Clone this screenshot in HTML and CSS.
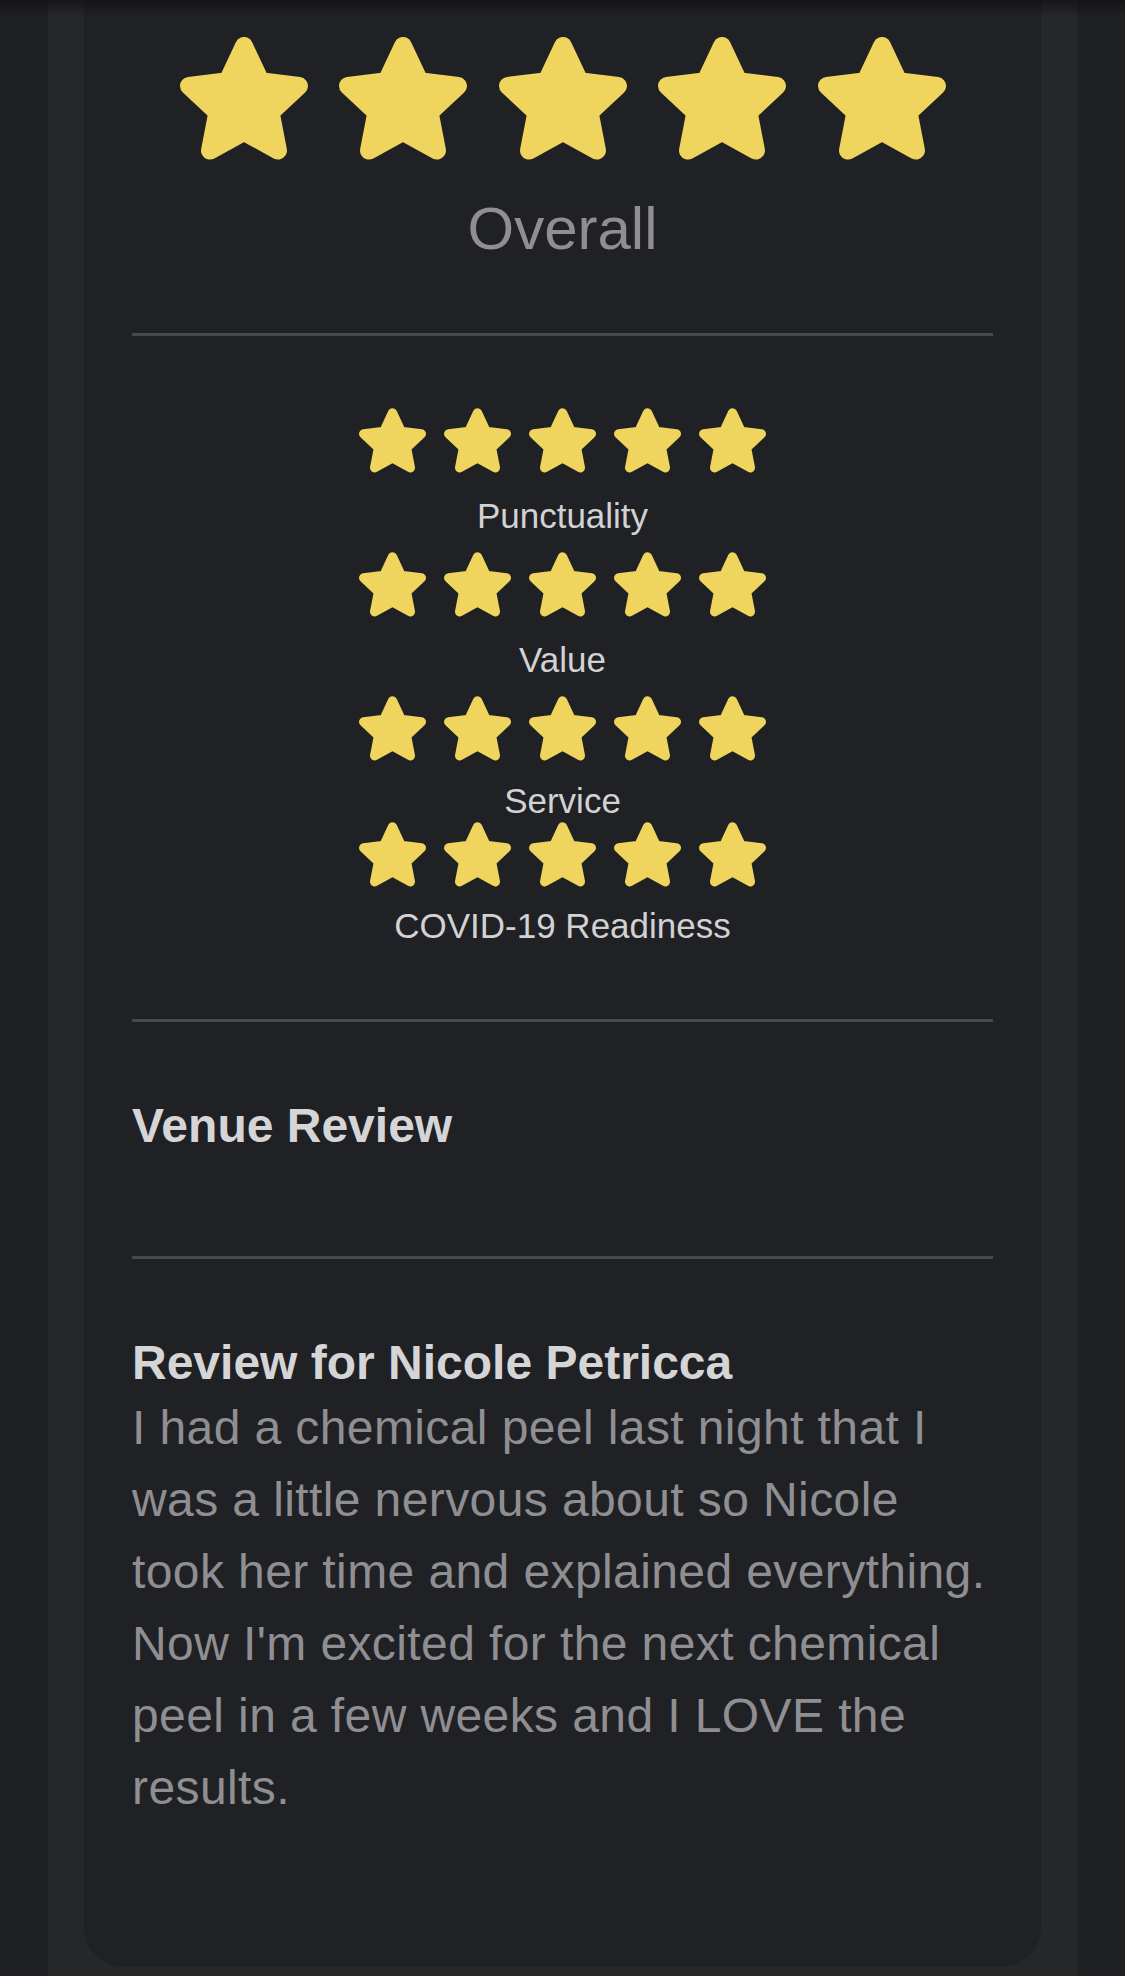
FILE: index.html
```html
<!DOCTYPE html>
<html lang="en">
<head>
<meta charset="utf-8">
<title>Review</title>
<link rel="stylesheet" href="styles.css">
</head>
<body>
<svg class="defs" width="0" height="0" aria-hidden="true">
  <symbol id="star" viewBox="0 0 128 123">
    <polygon points="64,9 80.46,44.15 118.97,48.94 90.63,75.45 97.97,113.56 64,94.8 30.03,113.56 37.37,75.45 9.03,48.94 47.54,44.15" fill="#efd55e" stroke="#efd55e" stroke-width="18" stroke-linejoin="round"/>
  </symbol>
</svg>
<div class="topshade"></div>
<div class="page">
  <div class="card">
    <div class="stars stars-lg">
      <svg class="star"><use href="#star"/></svg>
      <svg class="star"><use href="#star"/></svg>
      <svg class="star"><use href="#star"/></svg>
      <svg class="star"><use href="#star"/></svg>
      <svg class="star"><use href="#star"/></svg>
    </div>
    <div class="overall">Overall</div>
    <div class="divider divider-a"></div>
    <div class="ratings">
      <div class="rating">
        <div class="stars stars-sm">
          <svg class="star"><use href="#star"/></svg>
          <svg class="star"><use href="#star"/></svg>
          <svg class="star"><use href="#star"/></svg>
          <svg class="star"><use href="#star"/></svg>
          <svg class="star"><use href="#star"/></svg>
        </div>
        <div class="rating-label">Punctuality</div>
      </div>
      <div class="rating">
        <div class="stars stars-sm">
          <svg class="star"><use href="#star"/></svg>
          <svg class="star"><use href="#star"/></svg>
          <svg class="star"><use href="#star"/></svg>
          <svg class="star"><use href="#star"/></svg>
          <svg class="star"><use href="#star"/></svg>
        </div>
        <div class="rating-label">Value</div>
      </div>
      <div class="rating rating-tight">
        <div class="stars stars-sm">
          <svg class="star"><use href="#star"/></svg>
          <svg class="star"><use href="#star"/></svg>
          <svg class="star"><use href="#star"/></svg>
          <svg class="star"><use href="#star"/></svg>
          <svg class="star"><use href="#star"/></svg>
        </div>
        <div class="rating-label">Service</div>
      </div>
      <div class="rating rating-last">
        <div class="stars stars-sm">
          <svg class="star"><use href="#star"/></svg>
          <svg class="star"><use href="#star"/></svg>
          <svg class="star"><use href="#star"/></svg>
          <svg class="star"><use href="#star"/></svg>
          <svg class="star"><use href="#star"/></svg>
        </div>
        <div class="rating-label">COVID-19 Readiness</div>
      </div>
    </div>
    <div class="divider divider-b"></div>
    <h2 class="section-title">Venue Review</h2>
    <div class="divider divider-c"></div>
    <h2 class="review-title">Review for Nicole Petricca</h2>
    <p class="review-body">I had a chemical peel last night that I was a little nervous about so Nicole took her time and explained everything. Now I'm excited for the next chemical peel in a few weeks and I LOVE the results.</p>
  </div>
</div>
</body>
</html>
```
FILE: styles.css
```css
* { box-sizing: border-box; }

html, body {
  margin: 0;
  padding: 0;
}

body {
  background: #1f2023;
  font-family: "Liberation Sans", Arial, Helvetica, sans-serif;
  width: 1125px;
  min-height: 1976px;
  position: relative;
}

.defs {
  position: absolute;
  width: 0;
  height: 0;
  overflow: hidden;
}

.topshade {
  position: absolute;
  left: 0;
  top: 0;
  width: 100%;
  height: 16px;
  background: linear-gradient(to bottom, rgba(10, 10, 12, 0.55), rgba(10, 10, 12, 0));
  pointer-events: none;
  z-index: 2;
}

.page {
  margin: 0 48px;
  background: #262729;
  min-height: 1976px;
  padding: 0 36px 10px;
}

.card {
  background: #202124;
  border-radius: 0 0 40px 40px;
  padding: 37px 48px 143px;
  min-height: 1966px;
}

.stars {
  display: flex;
  justify-content: center;
}

.stars-lg {
  gap: 31.5px;
  height: 123px;
}

.stars-lg .star {
  width: 128px;
  height: 123px;
}

.stars-sm {
  gap: 18px;
  height: 65px;
}

.stars-sm .star {
  width: 67px;
  height: 65px;
}

.star {
  display: block;
  flex: none;
}

.overall {
  margin-top: 33px;
  font-size: 60px;
  line-height: 72px;
  color: #8f8f93;
  text-align: center;
}

.divider {
  height: 3px;
  background: #48494d;
}

.divider-a { margin-top: 68px; }
.divider-b { margin-top: 72px; }
.divider-c { margin-top: 101px; }

.ratings {
  margin-top: 72px;
  display: flex;
  flex-direction: column;
  gap: 15px;
}

.rating-tight {
  margin-bottom: -15px;
}

.rating-label {
  margin-top: 22px;
  font-size: 35px;
  line-height: 42px;
  color: #d2d2d4;
  text-align: center;
}

.rating-tight .rating-label { margin-top: 19px; }
.rating-last .rating-label { margin-top: 18px; }

.section-title,
.review-title {
  margin: 75px 0 0;
  font-size: 48px;
  line-height: 58px;
  font-weight: bold;
  color: #d5d5d7;
}

.review-body {
  margin: 0;
  font-size: 48px;
  line-height: 72px;
  letter-spacing: 0.4px;
  color: #8f8f93;
}
```
